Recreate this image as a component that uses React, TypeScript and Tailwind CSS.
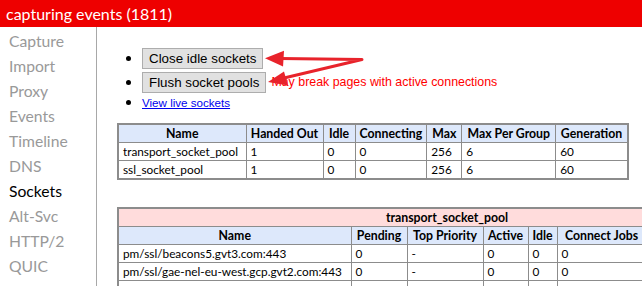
const navItems = [
  "Capture",
  "Import",
  "Proxy",
  "Events",
  "Timeline",
  "DNS",
  "Sockets",
  "Alt-Svc",
  "HTTP/2",
  "QUIC",
];

const poolCols = [
  { label: "Name", w: "w-[128px]" },
  { label: "Handed Out", w: "w-[77px]" },
  { label: "Idle", w: "w-[32px]" },
  { label: "Connecting", w: "w-[71px]" },
  { label: "Max", w: "w-[35px]" },
  { label: "Max Per Group", w: "w-[94px]" },
  { label: "Generation", w: "w-[72px]" },
];

const pools = [
  ["transport_socket_pool", "1", "0", "0", "256", "6", "60"],
  ["ssl_socket_pool", "1", "0", "0", "256", "6", "60"],
];

const groupCols = [
  { label: "Name", w: "w-[233px]" },
  { label: "Pending", w: "w-[56px]" },
  { label: "Top Priority", w: "w-[76px]" },
  { label: "Active", w: "w-[45px]" },
  { label: "Idle", w: "w-[29px]" },
  { label: "Connect Jobs", w: "w-[89px]" },
];

const groups = [
  ["pm/ssl/beacons5.gvt3.com:443", "0", "-", "0", "0", "0"],
  ["pm/ssl/gae-nel-eu-west.gcp.gvt2.com:443", "0", "-", "0", "0", "0"],
  // next row only shows its top edge in the window
  ["", "", "", "", "", ""],
];

function Bullet() {
  return <span className="w-[5px] h-[5px] rounded-full bg-black shrink-0 mr-[11px]" />;
}

function Arrows() {
  return (
    <svg
      className="absolute left-0 top-0 pointer-events-none"
      width="642"
      height="286"
      viewBox="0 0 642 286"
    >
      <g stroke="#e8232b" strokeWidth="3" strokeLinecap="round" strokeLinejoin="round" fill="none">
        <polyline points="280,58.5 362,59.5 284,78" />
      </g>
      <g fill="#e8232b">
        <polygon points="265,58.3 284,50.8 283,66.5" />
        <polygon points="268,82 284,71.5 288,85.5" />
      </g>
    </svg>
  );
}

export default function App() {
  return (
    <div className="relative w-[642px] h-[286px] overflow-hidden bg-white font-['Lato',sans-serif] text-black">
      {/* Title bar */}
      <div className="h-[27px] bg-[#ee0000] text-white text-[16px] leading-[27px] pl-[6px] whitespace-nowrap">
        capturing events (1811)
      </div>

      <div className="flex h-[259px]">
        {/* Tabs */}
        <nav className="w-[97px] shrink-0 border-r border-[#a8a8a8] pl-[9px] pt-[2px] text-[15.7px] leading-[25px]">
          {navItems.map((item) => (
            <div
              key={item}
              className={item === "Sockets" ? "text-black" : "text-[#999999]"}
            >
              {item}
            </div>
          ))}
        </nav>

        {/* Sockets view */}
        <main className="flex-1 min-w-0 pl-[20px]">
          <ul className="mt-[21px] pl-[9px]">
            <li className="flex items-center h-[21px] mb-[3px]">
              <Bullet />
              <button className="h-[21px] px-[6px] border border-[#adadad] bg-[#e1e1e1] font-['Liberation_Sans',Arial,sans-serif] text-[13.33px] leading-[19px] whitespace-nowrap">
                Close idle sockets
              </button>
            </li>
            <li className="flex items-center h-[21px] mb-[3px]">
              <Bullet />
              <button className="h-[21px] px-[6px] border border-[#adadad] bg-[#e1e1e1] font-['Liberation_Sans',Arial,sans-serif] text-[13.33px] leading-[19px] whitespace-nowrap">
                Flush socket pools
              </button>
              <span className="ml-[5px] text-[#ff0000] font-['Liberation_Sans',Arial,sans-serif] text-[12.4px] whitespace-nowrap">
                May break pages with active connections
              </span>
            </li>
            <li className="flex items-center h-[13px]">
              <Bullet />
              <a
                href="#"
                className="text-[#0000ee] underline font-['Liberation_Sans',Arial,sans-serif] text-[11.6px] leading-[13px]"
              >
                View live sockets
              </a>
            </li>
          </ul>

          <table className="mt-[14px] table-fixed border-collapse border-2 border-[#8c8c8c] text-[11.8px] leading-[17px]">
            <colgroup>
              {poolCols.map((c) => (
                <col key={c.label} className={c.w} />
              ))}
            </colgroup>
            <thead>
              <tr className="bg-[#dde8fb]">
                {poolCols.map((c) => (
                  <th key={c.label} className="border border-[#8c8c8c] font-bold text-[12.3px] px-[4px] text-center whitespace-nowrap">
                    {c.label}
                  </th>
                ))}
              </tr>
            </thead>
            <tbody>
              {pools.map((row) => (
                <tr key={row[0]}>
                  {row.map((v, i) => (
                    <td key={i} className="border border-[#8c8c8c] px-[4px] whitespace-nowrap">
                      {v}
                    </td>
                  ))}
                </tr>
              ))}
            </tbody>
          </table>

          <table className="mt-[27px] w-[660px] table-fixed border-collapse border-2 border-[#8c8c8c] text-[11.8px] leading-[17px]">
            <colgroup>
              {groupCols.map((c) => (
                <col key={c.label} className={c.w} />
              ))}
              <col />
            </colgroup>
            <thead>
              <tr className="bg-[#ffdcdc]">
                <th colSpan={7} className="border border-[#8c8c8c] font-bold text-[12.3px] text-center">
                  transport_socket_pool
                </th>
              </tr>
              <tr className="bg-[#dde8fb]">
                {groupCols.map((c) => (
                  <th key={c.label} className="border border-[#8c8c8c] font-bold text-[12.3px] px-[4px] text-center whitespace-nowrap">
                    {c.label}
                  </th>
                ))}
                <th className="border border-[#8c8c8c]" />
              </tr>
            </thead>
            <tbody>
              {groups.map((row, r) => (
                <tr key={r} className="h-[18px]">
                  {row.map((v, i) => (
                    <td key={i} className="border border-[#8c8c8c] px-[4px] whitespace-nowrap overflow-hidden">
                      {v}
                    </td>
                  ))}
                  <td className="border border-[#8c8c8c]" />
                </tr>
              ))}
            </tbody>
          </table>
        </main>
      </div>

      <Arrows />
    </div>
  );
}
